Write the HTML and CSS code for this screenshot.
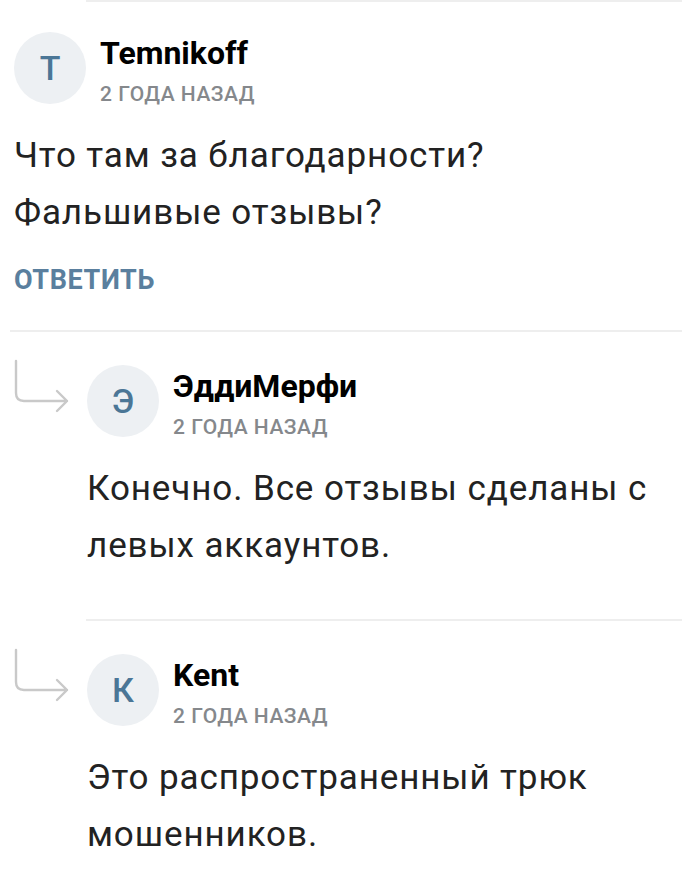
FILE: index.html
```html
<!DOCTYPE html>
<html lang="ru">
<head>
    <meta charset="UTF-8">
    <meta name="viewport" content="width=device-width, initial-scale=1.0">
    <title>Комментарии</title>
    <link rel="stylesheet" href="styles.css">
</head>
<body>
    <div class="divider divider-reply"></div>

    <div class="comment">
        <div class="comment-head">
            <div class="avatar">T</div>
            <div class="meta">
                <div class="author">Temnikoff</div>
                <div class="date">2 года назад</div>
            </div>
        </div>
        <p class="comment-text">Что там за благодарности?<br>Фальшивые отзывы?</p>
        <a class="reply-btn">Ответить</a>
    </div>

    <div class="divider"></div>

    <div class="comment reply">
        <svg class="reply-arrow" width="60" height="60" viewBox="0 0 60 60">
            <path d="M2 2 V34 Q2 42 10 42 H53 M43 32 L53 42 L43 52" fill="none" stroke="#c9c9c9" stroke-width="2.4" stroke-linecap="round" stroke-linejoin="round"/>
        </svg>
        <div class="comment-body">
            <div class="comment-head">
                <div class="avatar">Э</div>
                <div class="meta">
                    <div class="author">ЭддиМерфи</div>
                    <div class="date">2 года назад</div>
                </div>
            </div>
            <p class="comment-text">Конечно. Все отзывы сделаны с левых аккаунтов.</p>
        </div>
    </div>

    <div class="divider divider-reply"></div>

    <div class="comment reply">
        <svg class="reply-arrow" width="60" height="60" viewBox="0 0 60 60">
            <path d="M2 2 V34 Q2 42 10 42 H53 M43 32 L53 42 L43 52" fill="none" stroke="#c9c9c9" stroke-width="2.4" stroke-linecap="round" stroke-linejoin="round"/>
        </svg>
        <div class="comment-body">
            <div class="comment-head">
                <div class="avatar">К</div>
                <div class="meta">
                    <div class="author">Kent</div>
                    <div class="date">2 года назад</div>
                </div>
            </div>
            <p class="comment-text">Это распространенный трюк мошенников.</p>
        </div>
    </div>
</body>
</html>
```

FILE: styles.css
```css
body {
    font-family: Roboto, 'Noto Sans', sans-serif;
    margin: 0;
    padding: 0;
    background: #fff;
    color: #222;
    overflow: hidden;
}
.divider {
    height: 2px;
    background: #eeeeee;
    margin-left: 10px;
}
.divider-reply {
    margin-left: 86px;
}
.comment {
    padding: 30px 20px 36px 14px;
}
.reply {
    display: flex;
    padding-top: 33px;
    padding-bottom: 45px;
}
.reply-arrow {
    flex: none;
    margin: -6px 13px 0 0;
}
.comment-body {
    flex: 1;
}
.comment-head {
    display: flex;
    align-items: flex-start;
    gap: 14px;
}
.avatar {
    width: 72px;
    height: 72px;
    border-radius: 50%;
    background: #edf0f3;
    color: #4b7696;
    font-size: 34px;
    font-weight: 500;
    display: flex;
    align-items: center;
    justify-content: center;
}
.meta {
    padding-top: 3px;
}
.author {
    font-size: 32px;
    font-weight: 700;
    line-height: 36px;
    color: #000;
}
.date {
    margin-top: 11px;
    font-size: 21px;
    font-weight: 500;
    line-height: 24px;
    letter-spacing: 0.5px;
    text-transform: uppercase;
    color: #85888c;
}
.comment-text {
    margin: 21px 0 0;
    font-size: 35px;
    line-height: 57px;
    letter-spacing: 0.9px;
}
.reply-btn {
    display: block;
    margin-top: 25px;
    font-size: 27px;
    font-weight: 700;
    line-height: 28px;
    letter-spacing: 0.6px;
    text-transform: uppercase;
    color: #5a7f9e;
    cursor: pointer;
}
```
